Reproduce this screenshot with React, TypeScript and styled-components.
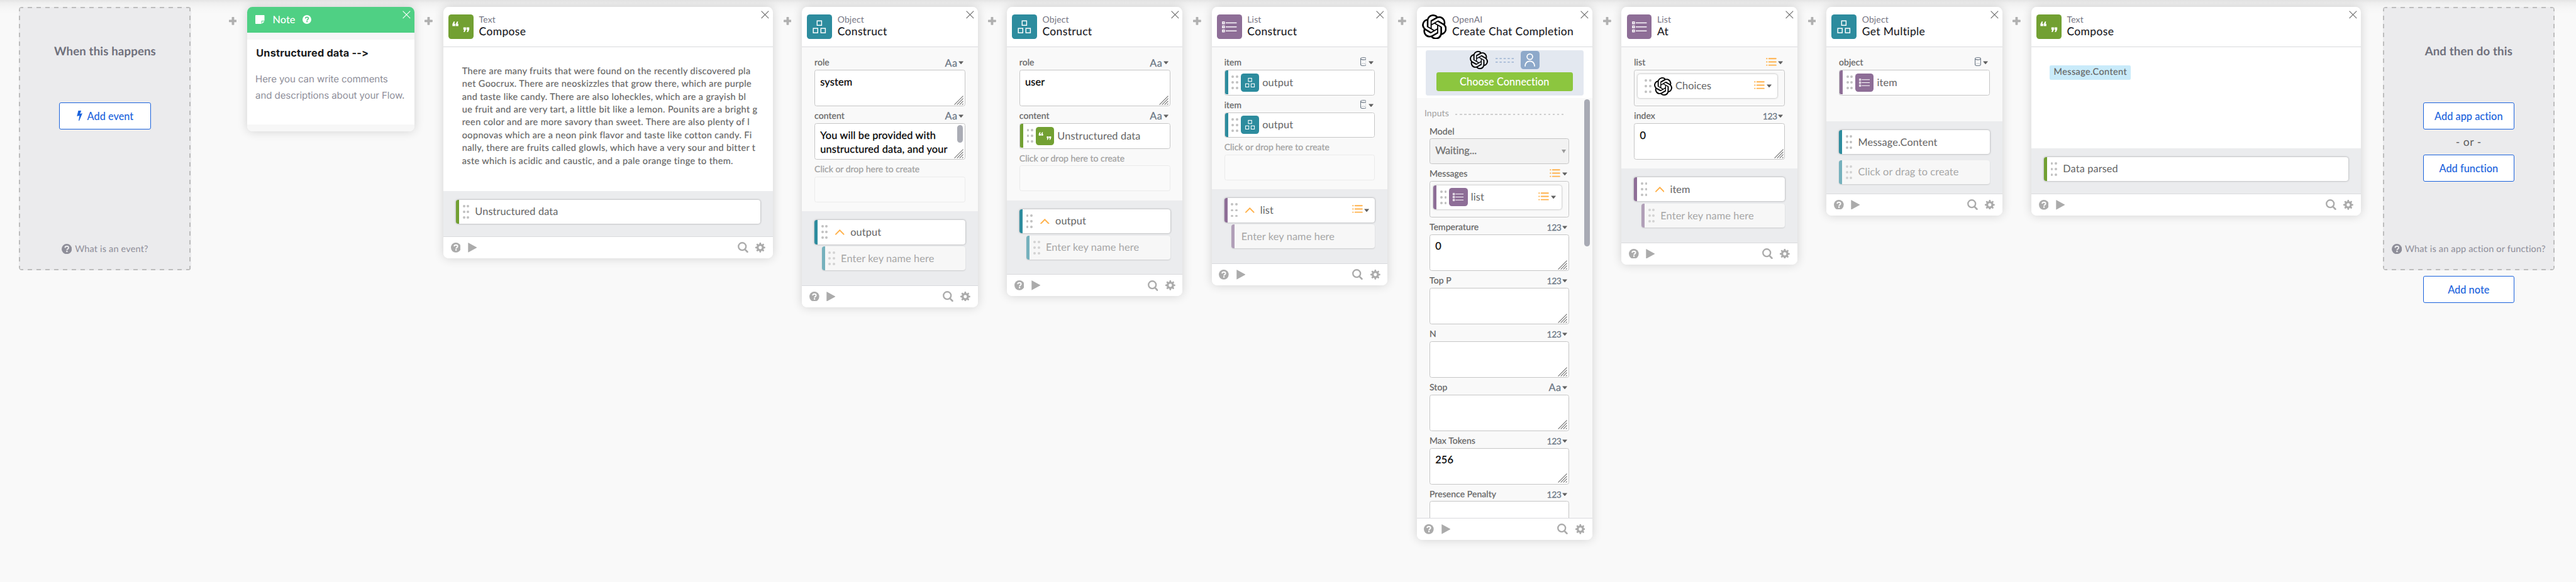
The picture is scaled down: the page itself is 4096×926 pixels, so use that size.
import React, { ReactNode } from "react";
import styled, { createGlobalStyle, css } from "styled-components";
import { SiOpenai } from "react-icons/si";

/* Design sizes are written in canvas units: 100 units = 1rem. */
const u = (n: number) => `${n / 100}rem`;

const type = (size: number, weight = 400, spacing = 0) => css`
  font-size: ${u(size)};
  font-weight: ${weight};
  letter-spacing: ${spacing}em;
`;

const medium = (px = 0.15) => css`
  -webkit-text-stroke: ${px}px currentColor;
`;

const colors = {
  page: "#f9f9f9",
  output: "#ebecee",
  line: "#d9dadd",
  text: "#646464",
  icon: "#ababab",
  slate: "#6b7785",
  orange: "#ffb14a",
  blue: "#1a62dc",
  green: "#72a032",
  teal: "#2d8c9e",
  purple: "#8e6e97",
};

const GlobalStyle = createGlobalStyle`
  html { font-size: 58.1818px; }
  body {
    margin: 0;
    background: ${colors.page};
    font-family: Lato, "Open Sans", sans-serif;
    font-size: ${u(24)};
    font-variant-ligatures: none;
    text-rendering: geometricPrecision;
    overflow: hidden;
  }
  *, *::before, *::after { box-sizing: border-box; }
  svg { display: block; flex: none; }
`;

/* ---------- canvas ---------- */

const Board = styled.main`
  position: relative;
  display: flex;
  align-items: flex-start;
  width: ${u(7040)};
  height: ${u(1591)};
  padding: ${u(19)} 0 0 ${u(52)};
  background: linear-gradient(#e4e4e4, #efefef 0.08rem, #f5f5f5 0.2rem, ${colors.page} 0.36rem);
  overflow: hidden;
  white-space: nowrap;
`;

const Connector = styled.div`
  flex: none;
  width: ${u(80)};
  display: flex;
  justify-content: center;
  padding-top: ${u(27)};
`;

/* ---------- trigger / action panels ---------- */

const dash = "#bdbdbd 0 0.12rem, transparent 0.12rem";

const DashedPanel = styled.section<{ $gapAfter?: number }>`
  flex: none;
  width: ${u(470)};
  height: ${u(720)};
  margin-right: ${(p) => u(p.$gapAfter ?? 0)};
  padding: ${u(102)} 0 ${u(38)};
  display: flex;
  flex-direction: column;
  align-items: center;
  border-radius: ${u(8)};
  background:
    repeating-linear-gradient(90deg, ${dash} 0.24105rem) top / 100% 0.04rem no-repeat,
    repeating-linear-gradient(90deg, ${dash} 0.24105rem) bottom / 100% 0.04rem no-repeat,
    repeating-linear-gradient(180deg, ${dash} 0.236rem) left / 0.04rem 100% no-repeat,
    repeating-linear-gradient(180deg, ${dash} 0.236rem) right / 0.04rem 100% no-repeat,
    #ebebed;
`;

const PanelTitle = styled.h2`
  margin: 0 0 ${u(119)};
  line-height: ${u(40)};
  color: #6f707c;
  ${type(32, 700, 0.008)}
`;

const OutlineButton = styled.button<{ $top?: number }>`
  flex: none;
  width: ${u(250)};
  height: ${u(74)};
  margin: ${(p) => u(p.$top ?? 0)} 0 0;
  padding: 0 0 ${u(1)};
  display: flex;
  align-items: center;
  justify-content: center;
  gap: ${u(13)};
  border: ${u(2)} solid ${colors.blue};
  border-radius: ${u(5)};
  background: #fff;
  color: ${colors.blue};
  font-family: inherit;
  ${type(28, 500, 0.002)}
`;

const OrLabel = styled.span`
  line-height: ${u(69)};
  color: #5d5d5d;
  ${type(30, 400, 0.03)}
`;

const PanelHelp = styled.div`
  margin-top: auto;
  display: flex;
  align-items: center;
  gap: ${u(8)};
  line-height: ${u(40)};
  color: #8e8e99;
  ${type(25, 400, 0.011)}
`;

const EndColumn = styled.div`
  flex: none;
  margin-left: ${u(60)};
  display: flex;
  flex-direction: column;
  align-items: center;
`;

/* ---------- cards ---------- */

const CardFrame = styled.article<{ $width?: number }>`
  position: relative;
  flex: none;
  width: ${(p) => u(p.$width ?? 480)};
  border-radius: ${u(14)};
  background: #fff;
  box-shadow: 0 0 ${u(28)} rgba(0, 0, 0, 0.16);
`;

const CardHeader = styled.header`
  height: ${u(110)};
  padding: ${u(20)} 0 0 ${u(14)};
  display: flex;
  gap: ${u(15)};
  border-bottom: ${u(2)} solid ${colors.line};
`;

const HeaderText = styled.div`
  padding-top: ${u(1)};
`;

const AppName = styled.div`
  line-height: ${u(28)};
  color: #757482;
  ${type(24, 400, 0.012)}
`;

const ActionName = styled.div`
  line-height: ${u(36)};
  color: #1b1b1f;
  ${type(30, 400, 0.022)}
  ${medium()}
`;

const CloseSlot = styled.span`
  position: absolute;
  top: ${u(10)};
  right: ${u(10)};
`;

const Tile = styled.span<{ $size: number; $color: string }>`
  flex: none;
  width: ${(p) => u(p.$size)};
  height: ${(p) => u(p.$size)};
  border-radius: ${u(8)};
  background: ${(p) => p.$color};
`;

const CardFooter = styled.footer`
  position: relative;
  height: ${u(60)};
  padding: 0 ${u(20)};
  display: flex;
  align-items: center;
  gap: ${u(20)};
  border-top: ${u(2)} solid ${colors.line};
  border-radius: 0 0 ${u(14)} ${u(14)};
  background: #fff;
  color: ${colors.icon};
`;

const Spacer = styled.span`
  flex: 1;
`;

const FieldsBody = styled.div<{ $bottom?: number }>`
  padding: ${u(16)} ${u(34)} ${(p) => u(p.$bottom ?? 25)};
  background: ${colors.page};
`;

const TextBody = styled.div<{ $height: number }>`
  height: ${(p) => u(p.$height)};
  padding: ${u(50)} 0 0 ${u(50)};
  color: ${colors.text};
`;

const Paragraph = styled.p`
  margin: ${u(-1)} 0 0 ${u(1)};
  white-space: pre;
  line-height: ${u(35.2)};
  ${type(25, 400, 0.0235)}
  ${medium()}
`;

const Highlight = styled.div`
  width: fit-content;
  height: ${u(39)};
  padding: 0 ${u(11)};
  line-height: ${u(38)};
  border-radius: ${u(4)};
  background: #c9ebfa;
  ${type(25, 400, 0.026)}
  ${medium()}
`;

const Outputs = styled.div<{ $bottom?: number; $gap?: number }>`
  padding: ${u(24)} ${u(34)} ${(p) => u(p.$bottom ?? 40)};
  display: flex;
  flex-direction: column;
  gap: ${(p) => u(p.$gap ?? 6)};
  background: ${colors.output};
`;

/* ---------- fields ---------- */

const FieldLabel = styled.div<{ $muted?: boolean }>`
  height: ${u(46)};
  padding: ${u(4)} ${u(4)} 0 0;
  display: flex;
  align-items: center;
  justify-content: space-between;
  color: ${(p) => (p.$muted ? "#a0a0a0" : colors.text)};
  ${(p) => type(24, 400, p.$muted ? 0.001 : 0.006)}
  ${medium(0.25)}
`;

const TypePicker = styled.span<{ $gap?: number }>`
  display: flex;
  align-items: center;
  gap: ${(p) => u(p.$gap ?? 5)};
  color: ${colors.slate};

  ${FieldLabel} & {
    margin-top: ${u(4)};
  }
`;

const NumberType = styled.span`
  ${type(24, 400, -0.03)}
`;

const StringType = styled.span`
  ${type(28, 400, 0.03)}
`;

const RaisedGlyph = styled.span`
  margin-bottom: ${u(6)};
`;

const Input = styled.div<{ $height?: number; $fill?: string; $faint?: boolean }>`
  position: relative;
  height: ${(p) => u(p.$height ?? 100)};
  display: flex;
  align-items: flex-start;
  border: ${u(2)} solid ${(p) => (p.$faint ? "#ebebeb" : "#c6c6c6")};
  border-radius: ${u(6)};
  background: ${(p) => p.$fill ?? "#fff"};
  overflow: hidden;
`;

const InputText = styled.p<{ $color?: string; $spacing?: number }>`
  margin: 0;
  padding: ${u(13)} 0 0 ${u(14)};
  white-space: pre;
  line-height: ${u(39)};
  color: ${(p) => p.$color ?? "#000"};
  ${(p) => type(28, 400, p.$spacing ?? 0.011)}
  ${medium(0.25)}
`;

const GripSlot = styled.span`
  position: absolute;
  right: ${u(2)};
  bottom: ${u(2)};
`;

const InnerScroll = styled.span`
  position: absolute;
  top: ${u(3)};
  right: ${u(5)};
  width: ${u(16)};
  height: ${u(48)};
  border-radius: ${u(8)};
  background: #aaacb5;
`;

const SelectCaret = styled.span`
  position: absolute;
  right: ${u(6)};
  top: ${u(29)};
  color: #9a9a9a;
`;

/* ---------- tokens ---------- */

const Token = styled.div<{ $bar?: string; $raised?: boolean; $faded?: boolean; $indent?: number }>`
  flex: 1 0 auto;
  height: ${u(66)};
  margin-left: ${(p) => u(p.$indent ?? 0)};
  padding-right: ${u(15)};
  display: flex;
  align-items: center;
  border-left: ${u(9)} solid ${(p) => p.$bar ?? "#fff"};
  border-radius: ${(p) => u(p.$raised ? 7 : 4)};
  background: ${(p) => (p.$faded ? "#f7f7f7" : "#fff")};
  color: ${(p) => (p.$faded ? "#a6a6a6" : colors.text)};
  box-shadow: ${(p) => (p.$raised ? (p.$faded ? "0 1px 2px rgba(0,0,0,.14)" : "0 0 3px rgba(0,0,0,.36)") : "none")};
`;

const NestedToken = styled.div`
  flex: 1;
  display: flex;
  padding: ${u(10)} ${u(19)} 0 ${u(9)};
`;

const TokenText = styled.span<{ $left: number }>`
  margin-left: ${(p) => u(p.$left)};
  line-height: ${u(40)};
  ${type(28, 400, 0.008)}
`;

const Handle = styled.span<{ $faded?: boolean }>`
  display: grid;
  grid-template-columns: repeat(2, ${u(6.6)});
  grid-auto-rows: ${u(6.6)};
  gap: ${u(9)} ${u(4.6)};
  margin-left: ${u(10)};
  opacity: ${(p) => (p.$faded ? 0.65 : 1)};
`;

const HandleDot = styled.i`
  border-radius: 50%;
  background: #c1c1c1;
`;

const Gap = styled.span<{ $w: number }>`
  flex: none;
  width: ${(p) => u(p.$w)};
`;

/* ---------- connection block and scrolling inputs ---------- */

const ConnectionArea = styled.div`
  height: ${u(140)};
  padding: ${u(8)} ${u(24)};
`;

const ConnectionBox = styled.div`
  height: ${u(124)};
  padding: ${u(3)} ${u(30)} 0;
  border-radius: ${u(6)};
  background: #e3e8f0;
`;

const ConnectionIcons = styled.div`
  display: flex;
  align-items: center;
  justify-content: center;
  gap: ${u(20)};
  margin-bottom: ${u(8)};
`;

const ConnectButton = styled.button`
  display: block;
  width: 100%;
  height: ${u(52)};
  padding: 0 0 ${u(2)};
  border: 0;
  border-radius: ${u(6)};
  background: #8cc63f;
  color: #fff;
  font-family: inherit;
  ${type(28, 500, 0.005)}
`;

const ScrollArea = styled.div`
  position: relative;
  height: ${u(1147)};
  padding: ${u(20)} ${u(64)} 0 ${u(35)};
  background: ${colors.page};
  overflow: hidden;
`;

const SectionTitle = styled.div`
  height: ${u(40)};
  margin: 0 ${u(15)} ${u(4)} ${u(-14)};
  display: flex;
  align-items: center;
  justify-content: space-between;
  color: #a0a0a0;
  ${type(24, 400, 0.01)}
`;

const DashRule = styled.i`
  width: ${u(296)};
  height: ${u(2)};
  margin-top: ${u(8)};
  background: repeating-linear-gradient(90deg, #cfcfcf 0 0.06rem, transparent 0.06rem 0.121rem);
`;

const Scrollbar = styled.span`
  position: absolute;
  top: ${u(2)};
  right: ${u(6)};
  width: ${u(16)};
  height: ${u(402)};
  border-radius: ${u(8)};
  background: #a8aab4;
`;

/* ---------- note ---------- */

const NoteHeader = styled.header`
  height: ${u(70)};
  padding-left: ${u(22)};
  display: flex;
  align-items: center;
  border-radius: ${u(14)} ${u(14)} 0 0;
  background: #4fd084;
  color: #fff;
  ${type(28, 500, 0.006)}
`;

const NoteLabel = styled.span`
  margin: 0 ${u(20)} 0 ${u(22)};
`;

const NoteBody = styled.div`
  height: ${u(270)};
  padding: ${u(18)} ${u(22)};
  border: solid #f7f7f7;
  border-width: ${u(20)} 0;
  border-radius: 0 0 ${u(14)} ${u(14)};
  font-family: Inter, sans-serif;
  font-feature-settings: "calt" 0;
`;

const NoteTitle = styled.h3`
  margin: 0 0 ${u(29)} ${u(2)};
  line-height: ${u(40)};
  color: #1b1c20;
  ${type(28, 700, 0.012)}
`;

const NoteText = styled.p`
  margin: 0;
  white-space: pre;
  line-height: ${u(44)};
  color: #8e8e99;
  ${type(26, 400, -0.008)}
`;

/* ---------- icons ---------- */

const Close = ({ color = "#6b6b6b" }: { color?: string }) => (
  <CloseSlot>
    <svg width={u(22)} height={u(22)} viewBox="0 0 22 22" fill="none" stroke={color} strokeWidth="1.9">
      <path d="M1 1 21 21M21 1 1 21" />
    </svg>
  </CloseSlot>
);

const Plus = () => (
  <svg width={u(22)} height={u(22)} viewBox="0 0 22 22" fill="#b0b0b0">
    <rect x="7.8" width="6.6" height="22" rx="1.4" />
    <rect y="7.7" width="22" height="6.6" rx="1.4" />
  </svg>
);

const Question = ({ size = 27, mark = "#fff" }: { size?: number; mark?: string }) => (
  <svg width={u(size)} height={u(size)} viewBox="0 0 27 27">
    <circle cx="13.5" cy="13.5" r="13.5" fill="currentColor" />
    <path d="M8.9 10.4C9.2 7.6 11 6.4 13.6 6.4c2.7 0 4.7 1.5 4.7 3.9 0 3.3-4.3 3-4.3 6" fill="none" stroke={mark} strokeWidth="3.3" />
    <rect x="12" y="18" width="3.9" height="3.8" fill={mark} />
  </svg>
);

const Play = () => (
  <svg width={u(25)} height={u(27)} viewBox="0 0 25 27" fill="currentColor">
    <path d="M0.5 0.8Q0.5 0 1.2 0.4L24 12.9Q25 13.5 24 14.1L1.2 26.6Q0.5 27 0.5 26.2Z" />
  </svg>
);

const Search = () => (
  <svg width={u(29)} height={u(29)} viewBox="0 0 29 29" fill="none" stroke="currentColor">
    <circle cx="12.4" cy="12.4" r="10.3" strokeWidth="4" />
    <path d="m19.5 20 7 7" strokeWidth="4.6" strokeLinecap="round" />
  </svg>
);

const Gear = () => (
  <svg width={u(27)} height={u(27)} viewBox="0 0 27 27">
    <g fill="currentColor">
      {[0, 45, 90, 135].map((a) => (
        <path key={a} transform={`rotate(${a} 13.5 13.5)`} d="M11.6 0h3.8l.9 5v17l-.9 5h-3.8l-.9-5v-17z" />
      ))}
      <circle cx="13.5" cy="13.5" r="9.9" />
    </g>
    <circle cx="13.5" cy="13.5" r="4.4" fill="#fff" />
  </svg>
);

const Bolt = () => (
  <svg width={u(16)} height={u(28)} viewBox="0 0 16 28" fill="currentColor">
    <path d="M4.3 0h8L9.2 8.6l6.4-1.5L6.8 28H5L7.6 13.6 0.5 15.4z" />
  </svg>
);

const NoteIcon = () => (
  <svg width={u(25)} height={u(24)} viewBox="0 0 25 24" fill="#fff">
    <path d="M1.5 0h22Q25 0 25 1.5V15.5H16.6V24H1.5Q0 24 0 22.5V1.5Q0 0 1.5 0z" />
    <path d="M18.2 17H25L18.2 24z" />
  </svg>
);

const Caret = () => (
  <svg width={u(14)} height={u(9)} viewBox="0 0 14 9" fill="#606060">
    <path d="M1 .8h12q.9 0 .3.8L8 8.2Q7 9 6 8.2L.7 1.6Q.1.8 1 .8z" />
  </svg>
);

const ListGlyph = () => (
  <svg width={u(29)} height={u(22)} viewBox="0 0 29 22" stroke={colors.orange} strokeWidth="3.4" strokeLinecap="round">
    {[2, 11, 20].map((y) => (
      <path key={y} d={`M2 ${y}h.6M8.2 ${y}h19`} />
    ))}
  </svg>
);

const Cylinder = () => (
  <svg width={u(17)} height={u(24)} viewBox="0 0 17 24" fill="none" stroke={colors.slate} strokeWidth="1.8">
    <ellipse cx="8.5" cy="4" rx="7.6" ry="3.1" />
    <path d="M.9 4v16c0 1.7 3.4 3.1 7.6 3.1s7.6-1.4 7.6-3.1V4" />
    <path d="M2.5 18.7c3-1.7 9-1.7 12 0" strokeWidth="1.1" strokeDasharray="1.5 1.1" />
  </svg>
);

const Chevron = () => (
  <svg width={u(25)} height={u(15)} viewBox="0 0 25 15" fill="none" stroke={colors.orange} strokeWidth="3.4" strokeLinecap="round">
    <path d="M1.8 13.2 12.5 2.3 23.2 13.2" />
  </svg>
);

const Grip = () => (
  <svg width={u(26)} height={u(26)} viewBox="0 0 26 26" stroke="#6c6c6c" strokeWidth="1.8">
    <path d="M1 25 25 1M8 25 25 8M15 25 25 15M22 25 25 22" />
  </svg>
);

const Person = () => (
  <Tile $size={50} $color="#8ea9ca">
    <svg width={u(50)} height={u(50)} viewBox="0 0 50 50" fill="none" stroke="#fff" strokeWidth="3">
      <circle cx="25" cy="16" r="7.6" />
      <path d="M12 42.5c.4-9.7 5.7-14.5 13-14.5s12.6 4.8 13 14.5" />
    </svg>
  </Tile>
);

const LinkDashes = () => (
  <svg width={u(50)} height={u(14)} viewBox="0 0 50 14" stroke="#8fa8cb" strokeWidth="2.2" strokeDasharray="6 5">
    <path d="M0 2h50M0 12h50" />
  </svg>
);

type Kind = "text" | "object" | "list" | "openai";

const kindColor: Record<Kind, string | undefined> = {
  text: colors.green,
  object: colors.teal,
  list: colors.purple,
  openai: undefined,
};

const AppIcon = ({ kind, size = 68 }: { kind: Kind; size?: number }) => {
  if (kind === "openai") return <SiOpenai style={{ width: u(size), height: u(size) }} color="#000" />;
  return (
    <Tile $size={size} $color={kindColor[kind]!}>
      <svg width={u(size)} height={u(size)} viewBox="0 0 68 68" fill="none" stroke="#fff" strokeWidth="2.5">
        {kind === "text" && (
          <g fill="#fff" stroke="none">
            <path d="M11 32v-6l3.5-6.5h3L16 25.5h2.6V32zM20 32v-6l3.5-6.5h3L25 25.5h2.2V32z" />
            <path d="M57 35.2v6L53.5 48h-3l1.5-6.3h-2.6v-6.5zM48 35.2v6L44.5 48h-3l1.5-6.3h-2.2v-6.5z" />
          </g>
        )}
        {kind === "object" && (
          <>
            <rect x="28" y="17.5" width="12.2" height="12.2" />
            <rect x="17.5" y="38" width="12.2" height="12.2" />
            <rect x="38.3" y="38" width="12.2" height="12.2" />
          </>
        )}
        {kind === "list" &&
          [23, 34, 45].map((y) => (
            <React.Fragment key={y}>
              <rect x="15.3" y={y - 2.5} width="5" height="5" />
              <path d={`M24 ${y}h30`} />
            </React.Fragment>
          ))}
      </svg>
    </Tile>
  );
};

const DragHandle = ({ faded }: { faded?: boolean }) => (
  <Handle $faded={faded}>
    {Array.from({ length: 6 }, (_, i) => (
      <HandleDot key={i} />
    ))}
  </Handle>
);

/* ---------- composed parts ---------- */

type ValueType = "number" | "string" | "list" | "object";

const TypeMenu = ({ type: t }: { type: ValueType }) => (
  <TypePicker $gap={t === "object" ? 6 : t === "list" ? 5 : 3}>
    {t === "number" && <NumberType>123</NumberType>}
    {t === "string" && <StringType>Aa</StringType>}
    {t === "list" && (
      <RaisedGlyph>
        <ListGlyph />
      </RaisedGlyph>
    )}
    {t === "object" && (
      <RaisedGlyph>
        <Cylinder />
      </RaisedGlyph>
    )}
    <Caret />
  </TypePicker>
);

const Field = ({ label, type: t, muted, children }: { label: string; type?: ValueType; muted?: boolean; children: ReactNode }) => (
  <div>
    <FieldLabel $muted={muted}>
      {label}
      {t && <TypeMenu type={t} />}
    </FieldLabel>
    {children}
  </div>
);

const TextArea = ({ value, scroll }: { value?: string; scroll?: boolean }) => (
  <Input>
    {value && <InputText>{value}</InputText>}
    {scroll && <InnerScroll />}
    <GripSlot>
      <Grip />
    </GripSlot>
  </Input>
);

const DropField = () => (
  <Field label="Click or drop here to create" muted>
    <Input $height={70} $fill="#fafafa" $faint />
  </Field>
);

const ValueToken = ({ kind, label, list, raised }: { kind: Kind; label: string; list?: boolean; raised?: boolean }) => (
  <Token $bar={kindColor[kind]} $raised={raised}>
    <DragHandle />
    <Gap $w={7} />
    <AppIcon kind={kind} size={50} />
    <TokenText $left={9}>{label}</TokenText>
    <Spacer />
    {list && <TypeMenu type="list" />}
  </Token>
);

const OutputToken = ({ kind, label, expandable, list }: { kind: Kind; label: string; expandable?: boolean; list?: boolean }) => (
  <Token $bar={kindColor[kind]} $raised>
    <DragHandle />
    {expandable && <Gap $w={21} />}
    {expandable && <Chevron />}
    <TokenText $left={16}>{label}</TokenText>
    <Spacer />
    {list && <TypeMenu type="list" />}
  </Token>
);

const placeholderBar: Record<string, string> = { object: "#75b1bd", list: "#b19fb8" };

const PlaceholderToken = ({ kind, label = "Enter key name here", indent = 20, handle = true }: { kind: "object" | "list"; label?: string; indent?: number; handle?: boolean }) => (
  <Token $bar={placeholderBar[kind]} $raised $faded $indent={indent}>
    {handle && <DragHandle faded />}
    <TokenText $left={handle ? 16 : 18}>{label}</TokenText>
  </Token>
);

const Footer = () => (
  <CardFooter>
    <Question />
    <Play />
    <Spacer />
    <Search />
    <Gear />
  </CardFooter>
);

const Card = ({ kind, app, action, width, children }: { kind: Kind; app: string; action: string; width?: number; children: ReactNode }) => (
  <>
    <Connector>
      <Plus />
    </Connector>
    <CardFrame $width={width}>
      <CardHeader>
        <AppIcon kind={kind} />
        <HeaderText>
          <AppName>{app}</AppName>
          <ActionName>{action}</ActionName>
        </HeaderText>
      </CardHeader>
      <Close />
      {children}
      <Footer />
    </CardFrame>
  </>
);

const article = [
  "There are many fruits that were found on the recently discovered pla",
  "net Goocrux. There are neoskizzles that grow there, which are purple",
  "and taste like candy. There are also loheckles, which are a grayish bl",
  "ue fruit and are very tart, a little bit like a lemon. Pounits are a bright g",
  "reen color and are more savory than sweet. There are also plenty of l",
  "oopnovas which are a neon pink flavor and taste like cotton candy. Fi",
  "nally, there are fruits called glowls, which have a very sour and bitter t",
  "aste which is acidic and caustic, and a pale orange tinge to them.",
].join("\n");

export default function App() {
  return (
    <>
      <GlobalStyle />
      <Board>
        <DashedPanel $gapAfter={74}>
          <PanelTitle>When this happens</PanelTitle>
          <OutlineButton>
            <Bolt />
            Add event
          </OutlineButton>
          <PanelHelp>
            <Question size={28} mark="#ebebed" />
            What is an event?
          </PanelHelp>
        </DashedPanel>

        <Connector>
          <Plus />
        </Connector>
        <CardFrame $width={456}>
          <NoteHeader>
            <NoteIcon />
            <NoteLabel>Note</NoteLabel>
            <Question size={24} mark="#4fd084" />
          </NoteHeader>
          <Close color="#fff" />
          <NoteBody>
            <NoteTitle>{"Unstructured data -->"}</NoteTitle>
            <NoteText>{"Here you can write comments\nand descriptions about your Flow."}</NoteText>
          </NoteBody>
        </CardFrame>

        <Card kind="text" app="Text" action="Compose" width={900}>
          <TextBody $height={393}>
            <Paragraph>{article}</Paragraph>
          </TextBody>
          <Outputs $bottom={34}>
            <OutputToken kind="text" label="Unstructured data" />
          </Outputs>
        </Card>

        <Card kind="object" app="Object" action="Construct">
          <FieldsBody>
            <Field label="role" type="string">
              <TextArea value="system" />
            </Field>
            <Field label="content" type="string">
              <TextArea value={"You will be provided with\nunstructured data, and your"} scroll />
            </Field>
            <DropField />
          </FieldsBody>
          <Outputs>
            <OutputToken kind="object" label="output" expandable />
            <PlaceholderToken kind="object" />
          </Outputs>
        </Card>

        <Card kind="object" app="Object" action="Construct">
          <FieldsBody>
            <Field label="role" type="string">
              <TextArea value="user" />
            </Field>
            <Field label="content" type="string">
              <Input $height={70}>
                <ValueToken kind="text" label="Unstructured data" />
              </Input>
            </Field>
            <DropField />
          </FieldsBody>
          <Outputs>
            <OutputToken kind="object" label="output" expandable />
            <PlaceholderToken kind="object" />
          </Outputs>
        </Card>

        <Card kind="list" app="List" action="Construct">
          <FieldsBody>
            {[0, 1].map((i) => (
              <Field key={i} label="item" type="object">
                <Input $height={70}>
                  <ValueToken kind="object" label="output" />
                </Input>
              </Field>
            ))}
            <DropField />
          </FieldsBody>
          <Outputs>
            <OutputToken kind="list" label="list" expandable list />
            <PlaceholderToken kind="list" handle={false} />
          </Outputs>
        </Card>

        <Card kind="openai" app="OpenAI" action="Create Chat Completion">
          <ConnectionArea>
            <ConnectionBox>
              <ConnectionIcons>
                <AppIcon kind="openai" size={50} />
                <LinkDashes />
                <Person />
              </ConnectionIcons>
              <ConnectButton>Choose Connection</ConnectButton>
            </ConnectionBox>
          </ConnectionArea>
          <ScrollArea>
            <SectionTitle>
              Inputs
              <DashRule />
            </SectionTitle>
            <Field label="Model">
              <Input $height={70} $fill="#f2f2f2">
                <InputText $color="#707070" $spacing={-0.006}>
                  Waiting...
                </InputText>
                <SelectCaret>
                  <svg width={u(12)} height={u(10)} viewBox="0 0 12 10" fill="currentColor">
                    <path d="M0 0h12L6 10z" />
                  </svg>
                </SelectCaret>
              </Input>
            </Field>
            <Field label="Messages" type="list">
              <Input $fill={colors.page}>
                <NestedToken>
                  <ValueToken kind="list" label="list" list raised />
                </NestedToken>
              </Input>
            </Field>
            <Field label="Temperature" type="number">
              <TextArea value="0" />
            </Field>
            <Field label="Top P" type="number">
              <TextArea />
            </Field>
            <Field label="N" type="number">
              <TextArea />
            </Field>
            <Field label="Stop" type="string">
              <TextArea />
            </Field>
            <Field label="Max Tokens" type="number">
              <TextArea value="256" />
            </Field>
            <Field label="Presence Penalty" type="number">
              <TextArea />
            </Field>
            <Scrollbar />
          </ScrollArea>
        </Card>

        <Card kind="list" app="List" action="At">
          <FieldsBody $bottom={24}>
            <Field label="list" type="list">
              <Input $fill={colors.page}>
                <NestedToken>
                  <ValueToken kind="openai" label="Choices" list raised />
                </NestedToken>
              </Input>
            </Field>
            <Field label="index" type="number">
              <TextArea value="0" />
            </Field>
          </FieldsBody>
          <Outputs>
            <OutputToken kind="list" label="item" expandable />
            <PlaceholderToken kind="list" />
          </Outputs>
        </Card>

        <Card kind="object" app="Object" action="Get Multiple">
          <FieldsBody $bottom={71}>
            <Field label="object" type="object">
              <Input $height={70}>
                <ValueToken kind="list" label="item" />
              </Input>
            </Field>
          </FieldsBody>
          <Outputs $bottom={25} $gap={16}>
            <OutputToken kind="object" label="Message.Content" />
            <PlaceholderToken kind="object" label="Click or drag to create" indent={0} />
          </Outputs>
        </Card>

        <Card kind="text" app="Text" action="Compose" width={900}>
          <TextBody $height={276}>
            <Highlight>Message.Content</Highlight>
          </TextBody>
          <Outputs $bottom={34}>
            <OutputToken kind="text" label="Data parsed" />
          </Outputs>
        </Card>

        <EndColumn>
          <DashedPanel>
            <PanelTitle>And then do this</PanelTitle>
            <OutlineButton>Add app action</OutlineButton>
            <OrLabel>- or -</OrLabel>
            <OutlineButton>Add function</OutlineButton>
            <PanelHelp>
              <Question size={28} mark="#ebebed" />
              What is an app action or function?
            </PanelHelp>
          </DashedPanel>
          <OutlineButton $top={16}>Add note</OutlineButton>
        </EndColumn>
      </Board>
    </>
  );
}
